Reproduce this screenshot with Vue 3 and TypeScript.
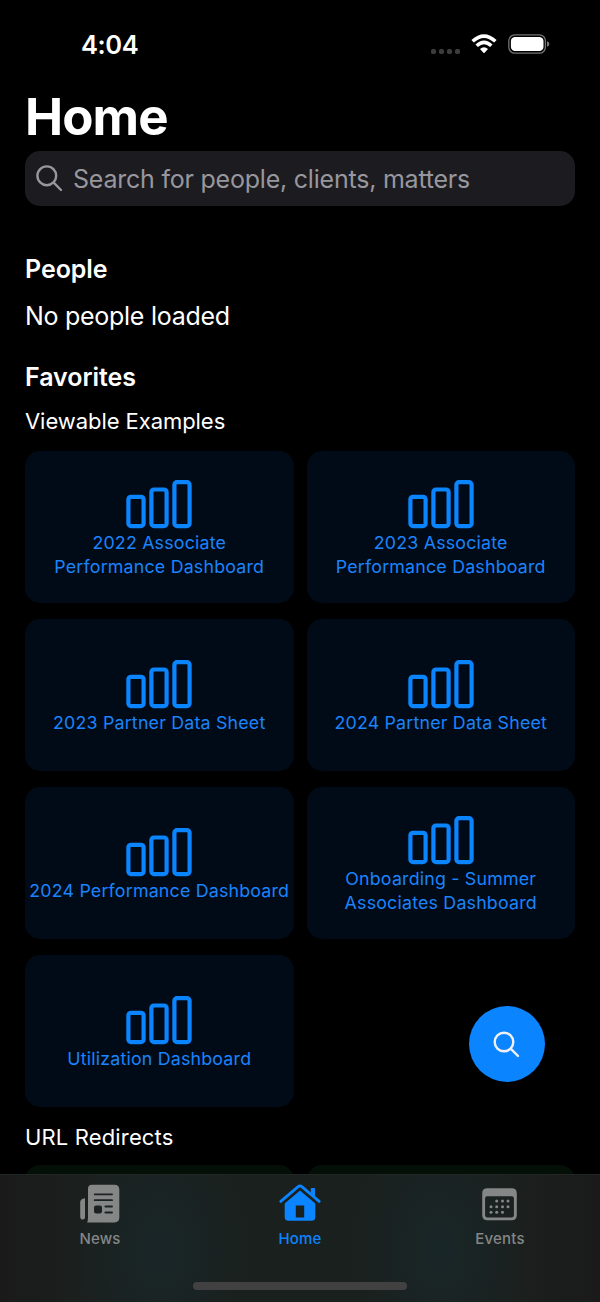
<script setup lang="ts">
interface Tile {
  lines: string[]
}

interface Tab {
  id: 'news' | 'home' | 'events'
  label: string
}

const favorites: Tile[] = [
  { lines: ['2022 Associate', 'Performance Dashboard'] },
  { lines: ['2023 Associate', 'Performance Dashboard'] },
  { lines: ['2023 Partner Data Sheet'] },
  { lines: ['2024 Partner Data Sheet'] },
  { lines: ['2024 Performance Dashboard'] },
  { lines: ['Onboarding - Summer', 'Associates Dashboard'] },
  { lines: ['Utilization Dashboard'] },
]

const tabs: Tab[] = [
  { id: 'news', label: 'News' },
  { id: 'home', label: 'Home' },
  { id: 'events', label: 'Events' },
]

const activeTab: Tab['id'] = 'home'

const calendarDots: [number, number][] = [
  [14.7, 13], [20.5, 13], [26, 13],
  [9, 18.7], [14.7, 18.7], [20.5, 18.7], [26, 18.7],
  [9, 24.3], [14.7, 24.3], [20.5, 24.3],
]
</script>

<template>
  <div class="screen">
    <header class="status">
      <span class="clock">4:04</span>
      <div class="indicators">
        <div class="signal"><i v-for="n in 4" :key="n"></i></div>
        <svg class="wifi" width="26" height="20" viewBox="0 0 26 20">
          <path d="M1.6 7.3 Q13 -3.2 24.4 7.3" />
          <path d="M5.7 11.7 Q13 4.9 20.3 11.7" />
          <path class="tip" d="M9 15 Q13 11.6 17 15 L13.6 18.7 Q13 19.3 12.4 18.7 Z" />
        </svg>
        <svg class="battery" width="42" height="20" viewBox="0 0 42 20">
          <rect class="shell" x="0.8" y="0.8" width="36.6" height="18.4" rx="6" />
          <rect class="charge" x="2.9" y="2.9" width="32.6" height="14.2" rx="4.2" />
          <path class="cap" d="M39 7.2 Q41.4 8 41.4 10 Q41.4 12 39 12.8 Z" />
        </svg>
      </div>
    </header>

    <main>
      <h1>Home</h1>
      <div class="search">
        <svg width="27" height="27" viewBox="0 0 27 27">
          <circle cx="10.8" cy="10.8" r="9.4" />
          <path d="M17.7 17.7 L25 25" />
        </svg>
        <span>Search for people, clients, matters</span>
      </div>

      <h2 class="people">People</h2>
      <p class="empty">No people loaded</p>
      <h2 class="favorites">Favorites</h2>
      <h3 class="viewable">Viewable Examples</h3>
      <div class="grid">
        <div v-for="tile in favorites" :key="tile.lines[0]" class="tile">
          <svg class="bars" width="66" height="49" viewBox="0 0 66 49">
            <rect x="2.4" y="16.8" width="15.2" height="29.3" rx="2.6" />
            <rect x="25.4" y="9.5" width="15.2" height="36.6" rx="2.6" />
            <rect x="48.4" y="2.2" width="15.2" height="43.9" rx="2.6" />
          </svg>
          <span v-for="line in tile.lines" :key="line" class="line">{{ line }}</span>
        </div>
      </div>
      <h3 class="redirects">URL Redirects</h3>
      <div class="grid">
        <div class="tile green"></div>
        <div class="tile green"></div>
      </div>
    </main>

    <button class="fab" type="button" aria-label="Search">
      <svg width="27" height="27" viewBox="0 0 27 27">
        <circle cx="11" cy="11" r="9.3" />
        <path d="M17.7 17.7 L25 25" />
      </svg>
    </button>

    <nav class="tabs">
      <div v-for="tab in tabs" :key="tab.id" class="tab" :class="{ active: tab.id === activeTab }">
        <svg v-if="tab.id === 'news'" width="40" height="39" viewBox="0 0 40 39">
          <path
            fill-rule="evenodd"
            d="M12 0.8 H34.5 Q39.3 0.8 39.3 5.6 V33.6 Q39.3 38.4 34.5 38.4 H7 Q8 37 8 34 V4.8 Q8 0.8 12 0.8 Z
               M14.7 9.4 a.9 .9 0 0 0 0 1.9 H32 a.9 .9 0 0 0 0 -1.9 Z
               M14.7 15.2 a.9 .9 0 0 0 0 1.9 H32 a.9 .9 0 0 0 0 -1.9 Z
               M16 21.6 Q14 21.6 14 23.6 V27.6 Q14 29.6 16 29.6 H20 Q22 29.6 22 27.6 V23.6 Q22 21.6 20 21.6 Z
               M25.4 21.6 a.9 .9 0 0 0 0 1.9 H32 a.9 .9 0 0 0 0 -1.9 Z
               M25.4 27.6 a.9 .9 0 0 0 0 1.9 H32 a.9 .9 0 0 0 0 -1.9 Z"
          />
          <path d="M5 14.2 V33.5 Q5 35.6 2.7 35.6 Q0.2 35.6 0.2 32.8 V18.5 Q0.2 14.5 5 14.2 Z" />
        </svg>
        <svg v-else-if="tab.id === 'home'" width="42" height="39" viewBox="0 0 42 39">
          <path class="roof" d="M1.8 17.4 L19.2 2.6 Q21 1.2 22.8 2.6 L40.2 17.4" />
          <path d="M31.8 4.8 Q31.8 4 32.6 4 H35.2 Q36 4 36 4.8 V13 L31.8 9.4 Z" />
          <path
            fill-rule="evenodd"
            d="M21 6.6 L36.3 19.6 V33 Q36.3 36.8 32.5 36.8 H9.5 Q5.7 36.8 5.7 33 V19.6 Z
               M16.8 21.4 V33.6 H25.2 V21.4 Z"
          />
        </svg>
        <svg v-else class="calendar" width="35" height="33" viewBox="0 0 35 33">
          <path
            fill-rule="evenodd"
            d="M5.4 0.3 H29.6 Q34.8 0.3 34.8 5.4 V27.2 Q34.8 32.2 29.6 32.2 H5.4 Q0.2 32.2 0.2 27.2 V5.4 Q0.2 0.3 5.4 0.3 Z
               M5.2 8.2 Q3.1 8.2 3.1 10.3 V26.8 Q3.1 29.4 5.6 29.4 H29.4 Q31.9 29.4 31.9 26.8 V10.3 Q31.9 8.2 29.8 8.2 Z"
          />
          <circle v-for="([x, y], i) in calendarDots" :key="i" :cx="x" :cy="y" r="1.5" />
        </svg>
        <span>{{ tab.label }}</span>
      </div>
      <div class="handle"></div>
    </nav>
  </div>
</template>

<style>
body {
  background: #000;
}
</style>

<style scoped>
.screen {
  position: relative;
  width: 600px;
  height: 1302px;
  overflow: hidden;
  background: #000;
  color: #fff;
  font-family: Inter, Roboto, sans-serif;
}

h1,
h2,
h3,
p {
  margin: 0;
}

.status {
  display: flex;
  justify-content: space-between;
  align-items: center;
  height: 88px;
  padding: 0 50px 0 81px;
  box-sizing: border-box;
}

.clock {
  padding-top: 2px;
  font-size: 25.5px;
  font-weight: 600;
  line-height: 30px;
  letter-spacing: -0.4px;
}

.indicators {
  display: flex;
  align-items: center;
}

.signal {
  display: flex;
  gap: 3.1px;
  margin: 14px 11px 0 0;
}

.signal i {
  width: 5px;
  height: 5px;
  border-radius: 1.7px;
  background: #3c3c3e;
}

.wifi {
  margin-right: 11px;
  fill: none;
  stroke: #fff;
  stroke-width: 3.6;
}

.wifi .tip {
  fill: #fff;
  stroke: none;
}

.shell {
  fill: none;
  stroke: #737376;
  stroke-width: 1.3;
}

.charge {
  fill: #fff;
}

.cap {
  fill: #77777a;
}

main {
  padding: 0 25px;
}

h1 {
  height: 63px;
  font-size: 51px;
  font-weight: 700;
  line-height: 57px;
  letter-spacing: -0.9px;
}

.search {
  display: flex;
  align-items: center;
  gap: 10px;
  height: 55px;
  padding-left: 11px;
  border-radius: 15px;
  background: #1c1b20;
  color: #98979e;
  font-size: 25px;
  letter-spacing: -0.22px;
}

.search svg,
.fab svg {
  fill: none;
  stroke: #98979e;
  stroke-width: 2.4;
  stroke-linecap: round;
}

h2 {
  font-size: 25px;
  font-weight: 600;
  line-height: 30px;
  letter-spacing: -0.05px;
}

.people {
  margin-top: 48px;
}

.empty {
  margin-top: 17px;
  font-size: 25px;
  line-height: 30px;
  letter-spacing: -0.28px;
}

.favorites {
  margin-top: 31px;
}

h3 {
  font-size: 22px;
  font-weight: 400;
  line-height: 28px;
  letter-spacing: -0.06px;
}

.viewable {
  margin: 15px 0 16px;
}

.redirects {
  margin: 16px 0 14px;
  letter-spacing: 0.15px;
}

.grid {
  display: grid;
  grid-template-columns: 1fr 1fr;
  grid-auto-rows: 152px;
  gap: 16px 13px;
}

.tile {
  display: flex;
  flex-direction: column;
  align-items: center;
  justify-content: center;
  border-radius: 15px;
  background: #000b17;
  color: #1b83fb;
}

.tile.green {
  background: #041007;
}

.bars {
  margin: 5px 0 2px;
  fill: none;
  stroke: #0a84ff;
  stroke-width: 4.2;
}

.line {
  font-size: 17.8px;
  line-height: 24.4px;
  letter-spacing: 0.2px;
  white-space: nowrap;
}

.fab {
  position: absolute;
  left: 469px;
  top: 1006px;
  display: flex;
  align-items: center;
  justify-content: center;
  width: 76px;
  height: 76px;
  padding: 0;
  border: 0;
  border-radius: 50%;
  background: #0a84ff;
}

.fab svg {
  margin-right: 1px;
  stroke: #f1f1f3;
}

.tabs {
  position: absolute;
  left: 0;
  right: 0;
  bottom: 0;
  display: flex;
  height: 128px;
  box-sizing: border-box;
  padding-top: 9px;
  border-top: 1px solid #222624;
  background:
    radial-gradient(ellipse 90px 130px at 160px 75px, #192628, transparent),
    radial-gradient(ellipse 90px 130px at 440px 75px, #192628, transparent),
    linear-gradient(90deg, #1a1a1a, #1b201e 15%, #1a201d 50%, #1b201e 85%, #1a1a1a);
}

.tab {
  display: grid;
  grid-template-rows: 39px 18px;
  row-gap: 7px;
  align-content: start;
  align-items: center;
  justify-items: center;
  flex: 1;
  color: #858787;
  fill: #858787;
  font-size: 15px;
  font-weight: 500;
  line-height: 18px;
  letter-spacing: 0.2px;
}

.tab svg {
  margin-right: 1px;
}

.calendar {
  margin-top: 2px;
}

.tab.active {
  color: #0a84ff;
  fill: #0a84ff;
}

.roof {
  fill: none;
  stroke: #0a84ff;
  stroke-width: 2.8;
  stroke-linecap: round;
}

.handle {
  position: absolute;
  left: 193px;
  bottom: 12px;
  width: 214px;
  height: 8px;
  border-radius: 4px;
  background: #414142;
}
</style>
